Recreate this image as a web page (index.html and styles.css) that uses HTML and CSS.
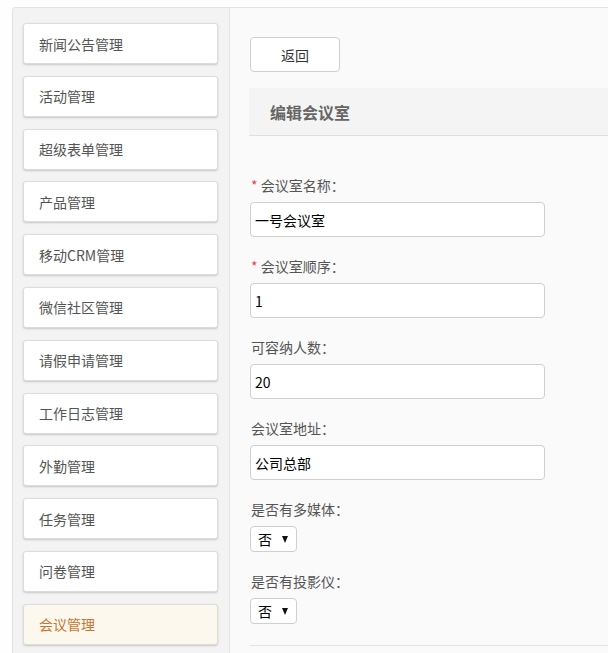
FILE: index.html
```html
<!DOCTYPE html>
<html lang="zh-CN">
<head>
<meta charset="utf-8">
<link rel="stylesheet" href="styles.css">
</head>
<body>
<div class="frame">
  <aside class="sidebar">
    <a class="nav-item">新闻公告管理</a>
    <a class="nav-item">活动管理</a>
    <a class="nav-item">超级表单管理</a>
    <a class="nav-item">产品管理</a>
    <a class="nav-item">移动CRM管理</a>
    <a class="nav-item">微信社区管理</a>
    <a class="nav-item">请假申请管理</a>
    <a class="nav-item">工作日志管理</a>
    <a class="nav-item">外勤管理</a>
    <a class="nav-item">任务管理</a>
    <a class="nav-item">问卷管理</a>
    <a class="nav-item active">会议管理</a>
  </aside>
  <main class="content">
    <button class="btn-back">返回</button>
    <div class="panel-head">编辑会议室</div>
    <form class="form">
      <div class="field">
        <label class="label"><span class="req">*</span> 会议室名称：</label>
        <input class="input" type="text" value="一号会议室">
      </div>
      <div class="field">
        <label class="label"><span class="req">*</span> 会议室顺序：</label>
        <input class="input" type="text" value="1">
      </div>
      <div class="field">
        <label class="label">可容纳人数：</label>
        <input class="input" type="text" value="20">
      </div>
      <div class="field">
        <label class="label">会议室地址：</label>
        <input class="input" type="text" value="公司总部">
      </div>
      <div class="field">
        <label class="label">是否有多媒体：</label>
        <div class="select-wrap"><select class="select"><option>否</option><option>是</option></select></div>
      </div>
      <div class="field">
        <label class="label">是否有投影仪：</label>
        <div class="select-wrap"><select class="select"><option>否</option><option>是</option></select></div>
      </div>
    </form>
    <div class="form-end"></div>
  </main>
</div>
</body>
</html>
```
FILE: styles.css
```css
* { box-sizing: border-box; }
html, body { margin: 0; padding: 0; }
body {
  background: #fefefe;
  font-family: "Noto Sans CJK SC", "Liberation Sans", sans-serif;
  font-size: 14px;
  color: #555;
  overflow: hidden;
  height: 653px;
}
.frame {
  display: flex;
  margin: 7px 0 0 12px;
  border-top: 1px solid #e2e2e2;
  border-left: 1px solid #e2e2e2;
  border-top-left-radius: 4px;
  height: 646px;
  overflow: hidden;
  background: #fafafa;
}
.sidebar {
  width: 217px;
  flex: none;
  background: #f3f3f3;
  border-right: 1px solid #e4e4e4;
  padding: 15px 11px 0 10px;
  display: flex;
  flex-direction: column;
  gap: 11.8px;
  border-top-left-radius: 4px;
}
.nav-item {
  display: flex;
  align-items: center;
  height: 41px;
  padding-left: 15px;
  background: #fff;
  border: 1px solid #dcdcdc;
  border-radius: 3px;
  box-shadow: 0 1px 2px rgba(0,0,0,0.18);
  color: #555;
  font-size: 14px;
  flex: none;
}
.nav-item.active {
  background: #fdf8ee;
  color: #c7742f;
}
.content {
  flex: 1;
  padding: 29px 0 0 20px;
  background: #fafafa;
}
.btn-back {
  display: block;
  width: 90px;
  height: 35px;
  background: #fff;
  border: 1px solid #cfcfcf;
  border-radius: 4px;
  font-family: inherit;
  font-size: 14px;
  color: #333;
  padding: 0;
}
.panel-head {
  margin: 16px 0 0 -1px;
  height: 48px;
  background: #f4f4f4;
  border-bottom: 1px solid #dedede;
  padding-left: 21px;
  display: flex;
  align-items: center;
  font-size: 16px;
  font-weight: bold;
  color: #666;
}
.form {
  padding-top: 40px;
  display: flex;
  flex-direction: column;
  gap: 20px;
}
.field {
  display: flex;
  flex-direction: column;
  align-items: flex-start;
}
.label {
  display: block;
  line-height: 19px;
  font-size: 14px;
  color: #555;
  margin-bottom: 7px;
  padding-left: 1px;
}
.req { color: #e0484b; }
.input {
  width: 295px;
  height: 35px;
  border: 1px solid #cfcfcf;
  border-radius: 4px;
  background: #fff;
  padding: 0 4px;
  font-family: "Noto Sans CJK SC", "Liberation Sans", sans-serif;
  font-size: 14px;
  color: #000;
  outline: none;
}
.select-wrap {
  position: relative;
  width: 47px;
  height: 26px;
}
.select {
  appearance: none;
  -webkit-appearance: none;
  width: 47px;
  height: 26px;
  border: 1px solid #cfcfcf;
  border-radius: 4px;
  background: #fff;
  padding: 0 0 0 7px;
  font-family: "Noto Sans CJK SC", "Liberation Sans", sans-serif;
  font-size: 14px;
  color: #000;
  outline: none;
}
.select-wrap::after {
  content: "";
  position: absolute;
  right: 9px;
  top: 10px;
  width: 0;
  height: 0;
  border-left: 3.5px solid transparent;
  border-right: 3.5px solid transparent;
  border-top: 7px solid #111;
  pointer-events: none;
}
.form-end {
  margin-top: 21px;
  border-top: 1px solid #e4e4e4;
}
```
